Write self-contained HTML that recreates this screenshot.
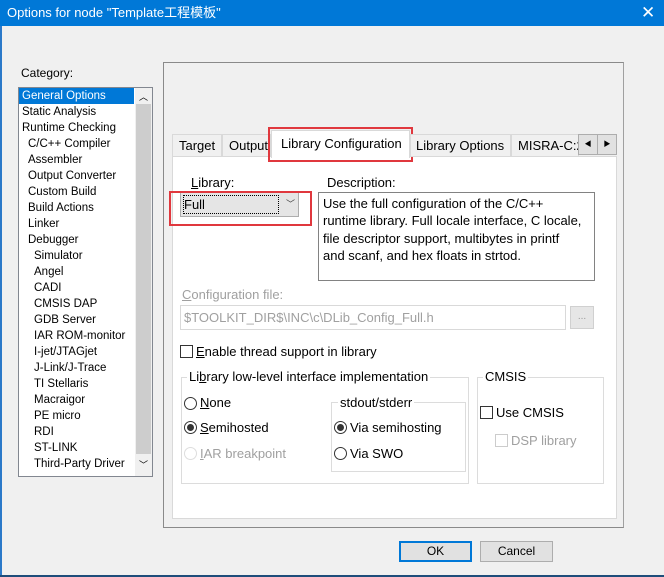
<!DOCTYPE html>
<html><head><meta charset="utf-8"><style>
*{margin:0;padding:0;box-sizing:border-box}
body{width:664px;height:577px;background:#f0f0f0;font-family:"Liberation Sans","Noto Sans CJK SC",sans-serif;font-size:12px;color:#000;position:relative;overflow:hidden}
.a{position:absolute;white-space:nowrap}
.t{line-height:16px}
.g{color:#a0a0a0}
u{text-decoration:underline}
.cb{position:absolute;width:13px;height:13px;border:1px solid #333;background:#fff}
.rb{position:absolute;width:13px;height:13px;border:1px solid #333;border-radius:50%;background:#fff}
.rb.on::after{content:"";position:absolute;left:2px;top:2px;width:7px;height:7px;border-radius:50%;background:#333}
.grp{position:absolute;border:1px solid #dcdcdc}
.lbl{position:absolute;background:#fff;padding:0 2px;line-height:14px}
</style></head><body>
<div class="a" style="left:0;top:0;width:664px;height:26px;background:#0078d7"></div>
<div class="a t" style="left:7px;top:5px;color:#fff;font-size:13px">Options for node "Template工程模板"</div>
<div class="a" style="left:641px;top:3px;color:#fff;font-size:17px">✕</div>
<div class="a" style="left:0;top:26px;width:2px;height:551px;background:#2b79c9"></div>
<div class="a" style="left:0;top:575px;width:664px;height:2px;background:#1e4d7a"></div>

<div class="a t" style="left:21px;top:65px">Category:</div>
<div class="a" style="left:18px;top:87px;width:135px;height:390px;background:#fff;border:1px solid #828790"></div>
<div class="a" style="left:135px;top:88px;width:17px;height:388px;background:#f0f0f0"></div>
<div class="a" style="left:136px;top:104px;width:15px;height:350px;background:#cdcdcd"></div>
<div class="a" style="left:139px;top:90px;font-size:9px">︿</div>
<div class="a" style="left:139px;top:458px;font-size:9px">﹀</div>
<div class="a" style="left:19px;top:88px;width:115px;height:16px;background:#0078d7"></div>
<div class="a t" style="left:22px;top:88px;line-height:16px;font-size:11.5px">
<div style="color:#fff">General Options</div>
<div>Static Analysis</div>
<div>Runtime Checking</div>
<div style="padding-left:6px">C/C++ Compiler<br>Assembler<br>Output Converter<br>Custom Build<br>Build Actions<br>Linker<br>Debugger</div>
<div style="padding-left:12px">Simulator<br>Angel<br>CADI<br>CMSIS DAP<br>GDB Server<br>IAR ROM-monitor<br>I-jet/JTAGjet<br>J-Link/J-Trace<br>TI Stellaris<br>Macraigor<br>PE micro<br>RDI<br>ST-LINK<br>Third-Party Driver</div>
</div>

<div class="a" style="left:163px;top:62px;width:461px;height:466px;border:1px solid #8a8a8a;border-right-color:#a0a0a0"></div>
<div class="a" style="left:172px;top:156px;width:445px;height:363px;background:#fff;border:1px solid #d9d9d9"></div>
<div class="a" style="left:172px;top:134px;width:50px;height:23px;border:1px solid #d9d9d9;background:#f0f0f0"></div>
<div class="a t" style="left:179px;top:138px;font-size:13px">Target</div>
<div class="a" style="left:222px;top:134px;width:49px;height:23px;border:1px solid #d9d9d9;background:#f0f0f0"></div>
<div class="a t" style="left:229px;top:138px;font-size:13px">Output</div>
<div class="a" style="left:271px;top:130px;width:139px;height:28px;background:#fff;border:1px solid #d9d9d9;border-bottom:none"></div>
<div class="a t" style="left:281px;top:136px;font-size:13px">Library Configuration</div>
<div class="a" style="left:268px;top:127px;width:145px;height:35px;border:2px solid #e0383e"></div>
<div class="a" style="left:410px;top:134px;width:101px;height:23px;border:1px solid #d9d9d9;background:#f0f0f0"></div>
<div class="a t" style="left:416px;top:138px;font-size:13px">Library Options</div>
<div class="a" style="left:511px;top:134px;width:68px;height:23px;border:1px solid #d9d9d9;background:#f0f0f0;overflow:hidden"></div>
<div class="a t" style="left:518px;top:138px;font-size:13px;width:60px;overflow:hidden">MISRA-C:2</div>
<div class="a" style="left:578px;top:134px;width:20px;height:21px;border:1px solid #adadad;background:#e1e1e1;font-size:7px;text-align:center;line-height:19px">◀</div>
<div class="a" style="left:597px;top:134px;width:20px;height:21px;border:1px solid #adadad;background:#e1e1e1;font-size:7px;text-align:center;line-height:19px">▶</div>

<div class="a t" style="left:191px;top:175px;font-size:13px"><u>L</u>ibrary:</div>
<div class="a" style="left:180px;top:192px;width:119px;height:25px;background:#e5e5e5;border:1px solid #adadad"></div>
<div class="a" style="left:183px;top:195px;width:96px;height:19px;border:1px dotted #000"></div>
<div class="a t" style="left:184px;top:197px;font-size:13px">Full</div>
<div class="a" style="left:286px;top:197px;font-size:9px;color:#444">﹀</div>
<div class="a" style="left:169px;top:191px;width:143px;height:35px;border:2px solid #e0383e"></div>

<div class="a t" style="left:327px;top:175px;font-size:13px">Description:</div>
<div class="a" style="left:318px;top:192px;width:277px;height:89px;border:1px solid #828282"></div>
<div class="a" style="left:323px;top:195px;font-size:13px;line-height:17.3px">Use the full configuration of the C/C++<br>runtime library. Full locale interface, C locale,<br>file descriptor support, multibytes in printf<br>and scanf, and hex floats in strtod.</div>

<div class="a t g" style="left:182px;top:287px;font-size:13px"><u>C</u>onfiguration file:</div>
<div class="a" style="left:180px;top:305px;width:386px;height:25px;border:1px solid #d9d9d9"></div>
<div class="a t g" style="left:184px;top:310px;font-size:13px">$TOOLKIT_DIR$\INC\c\DLib_Config_Full.h</div>
<div class="a" style="left:570px;top:306px;width:24px;height:23px;background:#e6e6e6;border:1px solid #d0d0d0;color:#999;text-align:center;line-height:20px;font-size:10px">...</div>

<div class="cb" style="left:180px;top:345px"></div>
<div class="a t" style="left:196px;top:344px;font-size:13px"><u>E</u>nable thread support in library</div>

<div class="grp" style="left:181px;top:377px;width:288px;height:107px"></div>
<div class="lbl" style="left:187px;top:370px;font-size:13px">Li<u>b</u>rary low-level interface implementation</div>
<div class="rb" style="left:184px;top:397px"></div>
<div class="a t" style="left:200px;top:395px;font-size:13px"><u>N</u>one</div>
<div class="rb on" style="left:184px;top:421px"></div>
<div class="a t" style="left:200px;top:420px;font-size:13px"><u>S</u>emihosted</div>
<div class="rb" style="left:184px;top:447px;border-color:#ddd"></div>
<div class="a t g" style="left:200px;top:446px;font-size:13px"><u>I</u>AR breakpoint</div>
<div class="grp" style="left:331px;top:402px;width:135px;height:70px"></div>
<div class="lbl" style="left:338px;top:396px;font-size:13px">stdout/stderr</div>
<div class="rb on" style="left:334px;top:421px"></div>
<div class="a t" style="left:350px;top:420px;font-size:13px">Via semihosting</div>
<div class="rb" style="left:334px;top:447px"></div>
<div class="a t" style="left:350px;top:446px;font-size:13px">Via SWO</div>

<div class="grp" style="left:477px;top:377px;width:127px;height:107px"></div>
<div class="lbl" style="left:483px;top:370px;font-size:13px">CMSIS</div>
<div class="cb" style="left:480px;top:406px"></div>
<div class="a t" style="left:496px;top:405px;font-size:13px">Use CMSIS</div>
<div class="cb" style="left:495px;top:434px;border-color:#ccc"></div>
<div class="a t g" style="left:511px;top:433px;font-size:13px">DSP library</div>

<div class="a" style="left:399px;top:541px;width:73px;height:21px;background:#e1e1e1;border:2px solid #0078d7;text-align:center;line-height:17px">OK</div>
<div class="a" style="left:480px;top:541px;width:73px;height:21px;background:#e1e1e1;border:1px solid #adadad;text-align:center;line-height:19px">Cancel</div>
</body></html>
